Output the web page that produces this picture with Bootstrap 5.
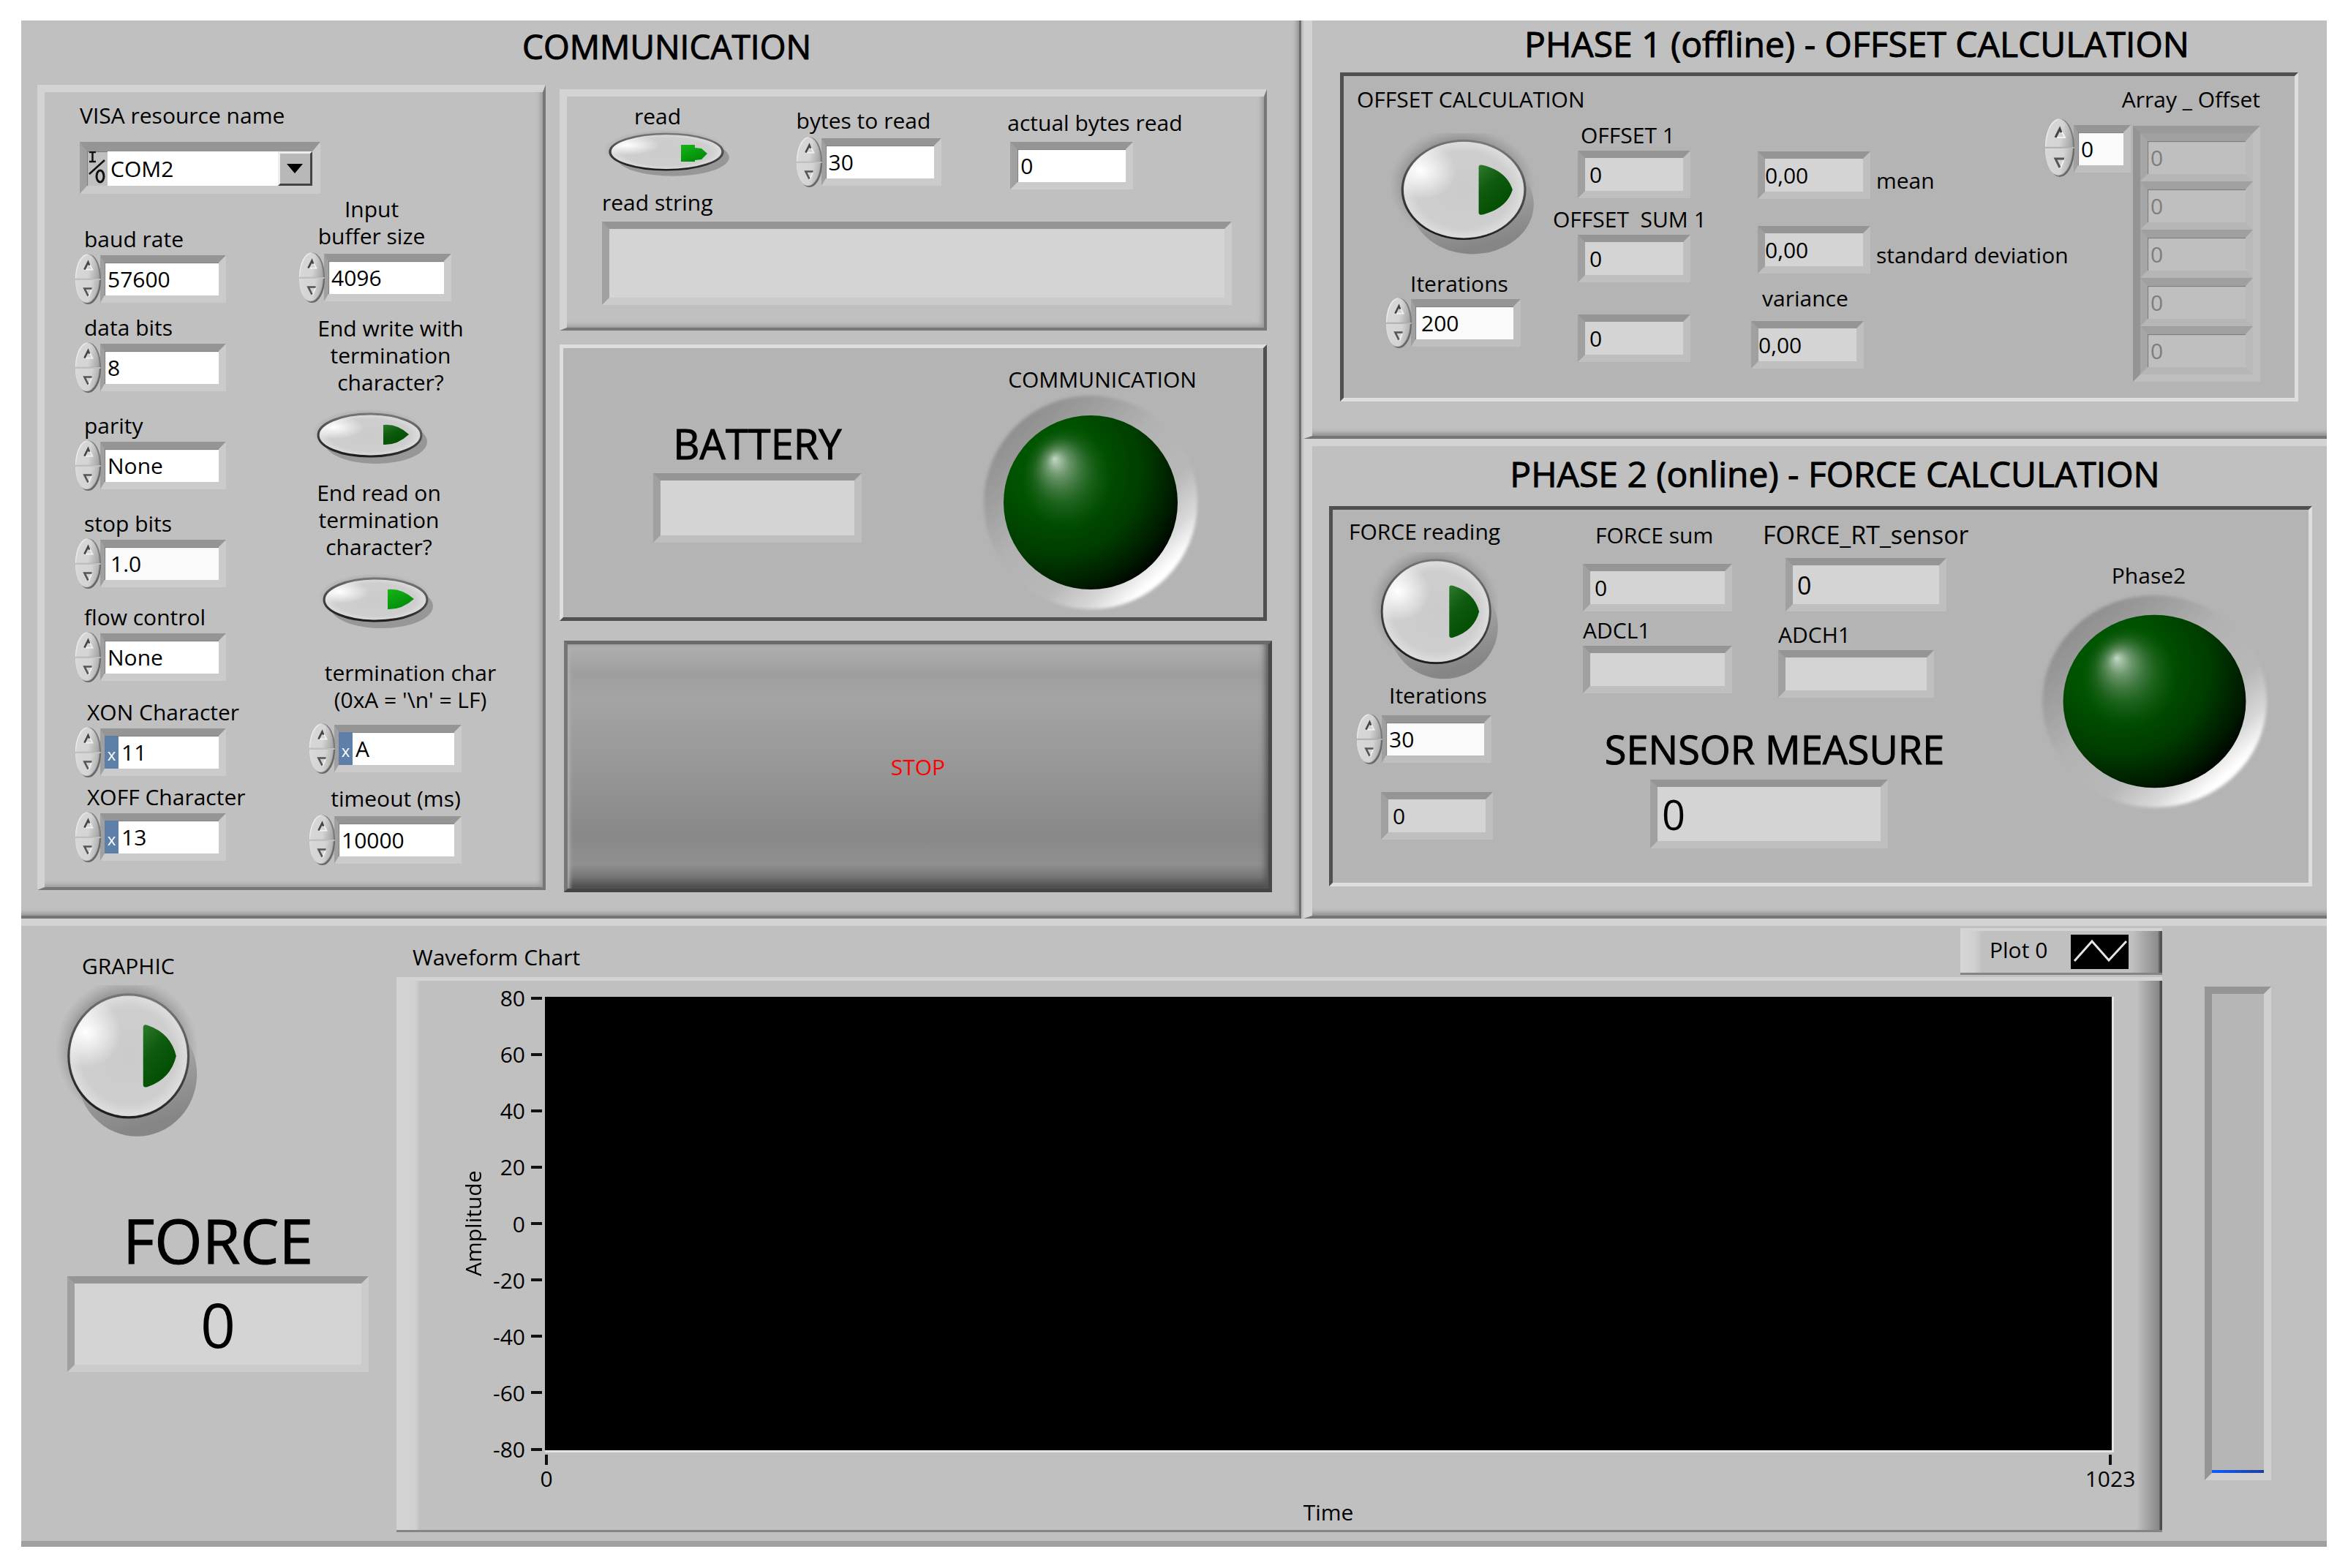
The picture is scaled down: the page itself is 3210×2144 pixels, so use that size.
<!DOCTYPE html>
<html lang="en">
<head>
<meta charset="utf-8">
<meta name="viewport" content="width=device-width, initial-scale=1">
<title>Force sensor front panel</title>
<link href="https://cdn.jsdelivr.net/npm/bootstrap@5.3.0/dist/css/bootstrap.min.css" rel="stylesheet">
<style>
:root{--lite:#d3d3d3;--face:#c0c0c0;--rim:#cbcbcb}
body{font-family:"Open Sans","Noto Sans",sans-serif;font-size:30px;line-height:37px;color:#000;background:#fff}
label,.cap{display:block;line-height:37px;white-space:nowrap}
h2,h3{font-weight:400;margin:0;white-space:nowrap;text-align:center;color:#000}
button{color:#000}
svg{display:block}

/* panes */
.panes{margin:28px 29px 27px;background:var(--face);grid-template-columns:1753fr 1399fr;grid-template-rows:572px 656px auto}
.pane-comm{grid-row:span 2;margin-right:3px;border-right:3px solid #6e6e6e;border-bottom:4px solid #757575;box-shadow:inset -7px -7px 6px -4px #8f8f8f;padding:5px 44px 0 22px}
.pane-phase{border-left:12px solid var(--lite);border-bottom:4px solid #757575;box-shadow:inset 0 -9px 6px -5px #8f8f8f}
.pane-two{border-top:10px solid var(--lite)}
.pane-chart{grid-column:span 2;padding-bottom:12px;border-top:10px solid var(--lite);border-bottom:8px solid #a0a0a0;grid-template-columns:513fr 2414fr 225fr}
.ttl{font-size:48px;line-height:60px;-webkit-text-stroke:1px #000}
.ttl-comm{font-size:46px;padding-left:40px}
.big{font-size:56px;line-height:64px;-webkit-text-stroke:1px #000}
.big-sensor{font-size:54px}
.huge{font-size:84px;line-height:96px;-webkit-text-stroke:1px #000}

/* bevels */
.raised{border:solid;border-width:10px 4px 4px 10px;border-color:var(--lite) #777 #777 var(--lite);box-shadow:inset -7px -7px 6px -4px #999}
.slab{background:#b4b4b4;border:5px solid;border-color:#dedede #505050 #505050 #dedede}
.well{background:#b4b4b4;border:5px solid;border-color:#505050 #dedede #dedede #505050;--rim:#bfbfbf}
.slab{--rim:#bfbfbf}
.fld{display:flex;flex:none;height:65px;background:#fff;border:10px solid;border-color:#959595 var(--rim) var(--rim) #a0a0a0;box-shadow:inset 1px 1px 1px #777}
.fld input,.fld select,.fld textarea{flex:1 1 0;min-width:0;width:100%;height:100%;border:0;background:transparent;padding:0 0 0 4px;font:inherit;color:inherit;appearance:none;outline:0;resize:none}
.ind{background:#d4d4d4;box-shadow:none}
.ind input{padding-left:6px}
.off{background:#fafafa}
.radix{width:19px;background:#5d7fa8;color:#fff;font-size:22px;text-align:center;line-height:50px}
.num .fld{border-left-width:6px;margin-left:-1px}

/* increment and decrement control */
.num{display:flex;align-items:center}
.spin{width:35px;height:69px;display:flex;flex-direction:column;gap:2px;flex:none;z-index:1}
.spin button{flex:1;border:0;padding:0;display:flex;align-items:center;justify-content:center;background:linear-gradient(100deg,#d8d8d8,#d4d4d4 55%,#9a9a9a);border-radius:50% 50% 0 0/100% 100% 0 0;box-shadow:inset -2px 0 1px #777,inset 1px 1px 1px #eee}
.spin button+button{border-radius:0 0 50% 50%/0 0 100% 100%;box-shadow:inset -2px -2px 1px #666,inset 1px 0 1px #ddd}
.plain{border:0;padding:0;background:none}

/* communication pane */
.comm-grid{margin-top:23px;grid-template-columns:695fr 967fr;column-gap:19px}
.visa-box{padding:13px 10px 34px 42px}
.visa{padding-left:6px}
.visa .fld{width:329px;height:71px;margin-top:18px;border-width:13px 11px 11px 10px;background:var(--face)}
.visa select{background:#fff}
.drop{width:47px;border:3px solid;border-color:#eee #444 #444 #eee;background:#b8b8b8;pointer-events:none}
.visa-cols{display:grid;grid-template-columns:306px auto}
.col-a{display:grid;padding-top:43px;grid-template-rows:121px 134px 134px 128px 130px 116px 106px}
.col-a label{padding-left:12px;margin-bottom:2px}
.col-a .fld{width:172px}
.col-b{display:grid;padding-top:2px;grid-template-rows:163px 225px 246px 172px 106px;text-align:center}
.col-b .fld{width:174px}
.col-b .num{margin-top:4px}
.col-b .low{padding-left:14px}
.col-b .lower{margin-top:14px}
.pill{width:161px;height:80px;margin-top:18px}
.w-buf{width:198px}.w-write{width:250px}.w-read{width:218px}.w-term{width:276px}.w-time{width:236px}
.stack{padding-top:6px;display:grid;grid-template-rows:330px 378px 344px;row-gap:19px}
.read-box{padding:0 44px 0 48px}
.read-row{display:grid;height:126px;grid-template-columns:265fr 288fr 306fr}
.read-row>div:nth-child(1){padding-top:8px}
.read-row>div:nth-child(2){padding-top:14px}
.read-row>div:nth-child(3){padding-top:17px}
.pill-read{width:176px;height:68px}
.read-string{height:114px;margin-top:8px}
.batt-box{padding:24px 86px 0 123px}
.batt{width:285px;padding-top:74px}
.batt .fld{height:95px;margin-top:9px}
.led{width:300px}
.led .cap{padding-left:32px}
.led svg{width:300px;height:300px}
.stop{margin:8px -7px -8px 6px;border:5px solid;border-color:#6a6a6a #484848 #444 #767676;border-radius:0;color:#f00;background:linear-gradient(#b0b0b0,#9e9e9e 12%,#a4a4a4 22%,#979797 50%,#888 78%,#909090 90%,#777 95%,#484848);box-shadow:inset -8px 0 8px -4px #555,inset 6px 0 5px -3px #b0b0b0}

/* phase one */
.offset-well{margin:9px 39px 0 38px;height:450px;display:grid;grid-template-columns:minmax(0,286fr) minmax(0,271fr) minmax(0,402fr) minmax(0,341fr)}
.p1-ttl{padding:2px 0 0 102px}
.oc{padding-top:13px}
.oc>label,.oc>.cap{padding-left:18px}
.oc .knob{width:215px;height:168px;margin:28px 0 19px 62px}
.iter{padding-left:58px}
.iter label{padding-left:33px;margin-bottom:1px}
.iter .fld{width:150px}
.sums{padding-top:62px}
.sums .fld{width:154px;margin:3px 0 0 34px}
.sums .fld+label{margin-top:10px}
.sums .first{padding-left:38px}
.sums .third{margin-top:44px}
.stats{padding-top:103px}
.stats .fld{width:154px}
.statline{display:flex;align-items:end;gap:8px;padding-left:9px;margin-bottom:37px}
.statline label{margin-bottom:7px}
.var label{padding-left:15px;margin:-22px 0 13px}
.arr{padding:13px 47px 0 0}
.arr .spin{width:40px;height:80px}
.arr .num{align-items:start}
.arr .num>.fld{width:78px;margin-top:9px}
.cells{flex:1;margin:10px 0 0 3px;border:10px solid;border-color:#9a9a9a #bebebe #bebebe #949494}
.cells .fld{height:66px;margin:0;background:#bfbfbf;color:#7d7d7d;border:10px solid;border-top-width:11px;border-color:#a0a0a0 #bababa #b6b6b6 #a6a6a6}

/* phase two */
.force-well{margin:14px 20px 0 23px;height:520px;display:grid;grid-template-columns:342fr 624fr 368fr}
.p2-ttl{padding-left:42px}
.fr{padding-top:11px}
.fr>.cap{padding-left:22px}
.fr .knob{width:190px;height:176px;margin:10px 0 1px 51px}
.fr .iter{padding-left:33px}
.fr .iter label{padding-left:44px;margin-bottom:7px}
.fr .count{width:153px;margin:38px 0 0 66px}
.meas{display:grid;padding-top:16px;grid-template-columns:246px auto;grid-template-rows:279px auto}
.meas .tall{height:73px}
.m1 .fld{width:204px;margin-top:3px}
.m1 label:first-child{padding-left:17px;margin-bottom:21px}
.m1 .adc{margin-top:7px}
.m2 .fld{width:213px;margin:3px 0 0 21px}
.m2 label:first-child{margin-bottom:13px;font-size:34px}
.m2 .tall{width:220px;margin-left:31px;font-size:34px}
.m2 .adc{margin-top:13px;padding-left:21px}
.sensor{grid-column:span 2;width:524px}
.sensor .fld{width:325px;height:94px;margin:10px 0 0 92px;font-size:56px}
.led-two{padding-top:71px;width:315px}
.led-two svg{width:315px;height:298px;margin-top:5px}

/* chart pane */
.graphic{padding:36px 0 0 47px}
.graphic>.cap{padding-left:36px}
.graphic .knob{width:210px;height:210px;margin:8px 0 91px}
.force{width:412px;margin-left:16px}
.force .fld{height:131px;font-size:84px;margin-top:1px}
.force input{text-align:center;padding:0}
.chart-head{height:70px;padding-left:22px}
.legend{width:276px;height:64px;margin-top:3px;padding-left:40px;border-top:4px solid #d3d3d3;border-bottom:3px solid #858585;background:linear-gradient(90deg,#d6d6d6 0,#d0d0d0 20px,#c0c0c0 30px,#c0c0c0 235px,#8c8c8c 270px,#555 273px,#555)}
.legend span{padding-bottom:6px}
.frame{height:759px;padding:22px 69px 0 86px;border-top:5px solid #d3d3d3;border-bottom:3px solid #858585;display:grid;grid-template-columns:38px 1fr;background:linear-gradient(90deg,#d3d3d3 0,#d1d1d1 26px,transparent 32px),linear-gradient(270deg,#4c4c4c 0,#4c4c4c 3px,#868686 4px,#c0c0c0 35px)}
.ylab{writing-mode:vertical-rl;transform:rotate(180deg);height:620px;text-align:center}
.plotgrid{display:grid;grid-template-columns:79px 1fr;grid-template-rows:620px auto}
.yticks{display:flex;flex-direction:column;justify-content:space-between;margin:-17px 4px -17px 0}
.yticks div{display:flex;align-items:center;justify-content:end;gap:8px}
.yticks div::after{content:"";width:15px;height:4px;background:#111}
.plot{background:#000;border:solid #e4e4e4;border-width:0 3px 3px 0;margin:0 -3px -3px 0;z-index:1}
.xticks{grid-column:2;display:flex;justify-content:space-between;margin:6px -33px 0;text-align:center}
.xticks div{width:70px}
.xticks div::before{content:"";display:block;width:4px;height:14px;margin:0 auto;background:#111}
.xlab{grid-column:2;text-align:center;margin-top:3px}
.tank{width:91px;height:675px;margin:83px 0 0 58px;border:10px solid;border-color:#959595 #d0d0d0 #d0d0d0 #959595;background:#b6b6b6;display:flex;align-items:end}
.tank div{width:100%;height:4px;background:linear-gradient(90deg,#0a5cff,#1f3f9a)}
</style>
</head>
<body>
<svg width="0" height="0" class="position-absolute" aria-hidden="true">
  <defs>
    <radialGradient id="gKnob" cx=".5" cy=".5" r=".52"><stop offset="0" stop-color="#cbcbcb"/><stop offset=".75" stop-color="#cecece"/><stop offset=".92" stop-color="#dcdcdc"/><stop offset="1" stop-color="#c2c2c2"/></radialGradient>
    <radialGradient id="gHi" cx=".14" cy=".3" r=".3"><stop offset="0" stop-color="#fff"/><stop offset="1" stop-color="#fff" stop-opacity="0"/></radialGradient>
    <linearGradient id="gShade" x1="0" y1="0" x2=".3" y2="1"><stop offset=".4" stop-color="#aaa"/><stop offset="1" stop-color="#868686"/></linearGradient>
    <radialGradient id="gHalo" cx=".5" cy=".5" r=".5"><stop offset=".75" stop-color="#808080" stop-opacity=".75"/><stop offset="1" stop-color="#999" stop-opacity="0"/></radialGradient>
    <linearGradient id="gEdge" x1=".6" y1="0" x2=".4" y2="1"><stop offset="0" stop-color="#777"/><stop offset="1" stop-color="#1c1c1c"/></linearGradient>
    <linearGradient id="gD" x1="0" y1="0" x2=".6" y2="1"><stop offset="0" stop-color="#2c7a2c"/><stop offset=".45" stop-color="#0e5a0e"/><stop offset="1" stop-color="#004c00"/></linearGradient>
    <linearGradient id="gOn" x1="0" y1="0" x2=".6" y2="1"><stop offset="0" stop-color="#17b517"/><stop offset="1" stop-color="#008a0a"/></linearGradient>
    <linearGradient id="gRing" x1=".15" y1=".1" x2=".86" y2=".88"><stop offset="0" stop-color="#8c8c8c"/><stop offset=".42" stop-color="#b2b2b2"/><stop offset=".68" stop-color="#b8b8b8"/><stop offset=".84" stop-color="#d8d8d8"/><stop offset=".95" stop-color="#fff"/></linearGradient>
    <radialGradient id="gLed" cx=".3" cy=".3" r=".78"><stop offset="0" stop-color="#005a00"/><stop offset=".3" stop-color="#005400"/><stop offset=".65" stop-color="#003c00"/><stop offset=".88" stop-color="#001c00"/><stop offset="1" stop-color="#000600"/></radialGradient>
    <radialGradient id="gSpot" cx=".5" cy=".5" r=".5" fx=".36" fy=".3"><stop offset="0" stop-color="#c4d8c4"/><stop offset=".25" stop-color="#7da07d" stop-opacity=".85"/><stop offset=".65" stop-color="#3c703c" stop-opacity=".45"/><stop offset="1" stop-color="#1c5c1c" stop-opacity="0"/></radialGradient>
    <filter id="soft" x="-10%" y="-10%" width="120%" height="120%"><feGaussianBlur stdDeviation="2"/></filter>
  </defs>
  <symbol id="knob" viewBox="0 0 200 195" preserveAspectRatio="none">
    <ellipse cx="93" cy="82" rx="93" ry="92" fill="url(#gHalo)"/>
    <ellipse cx="106" cy="113" rx="78" ry="79" fill="url(#gShade)"/>
    <circle cx="95" cy="90" r="78" fill="url(#gKnob)" stroke="url(#gEdge)" stroke-width="3"/>
    <circle cx="95" cy="90" r="76" fill="url(#gHi)"/>
    <path d="M114 54Q114 49 120 51Q150 61 157 90Q150 119 120 129Q114 131 114 126Z" fill="url(#gD)"/>
  </symbol>
  <symbol id="pillbase" viewBox="0 0 160 80" preserveAspectRatio="none">
    <ellipse cx="78" cy="33" rx="77" ry="33" fill="url(#gHalo)" opacity=".6"/>
    <ellipse cx="88" cy="45" rx="70" ry="30" fill="#979797"/>
    <ellipse cx="80" cy="36" rx="70" ry="29" fill="url(#gKnob)" stroke="url(#gEdge)" stroke-width="3"/>
    <ellipse cx="80" cy="36" rx="68" ry="27" fill="url(#gHi)"/>
  </symbol>
  <symbol id="led" viewBox="0 0 300 300" preserveAspectRatio="none">
    <circle cx="150" cy="150" r="146" fill="url(#gRing)" filter="url(#soft)"/>
    <circle cx="150" cy="150" r="119" fill="url(#gLed)"/>
    <ellipse cx="118" cy="118" rx="62" ry="70" fill="url(#gSpot)"/>
  </symbol>
  <symbol id="up" viewBox="0 0 20 20"><path d="M10 3L17 16H4" fill="none" stroke="#f2f2f2" stroke-width="2"/><path d="M4 16L10 4L12 9" fill="none" stroke="#444" stroke-width="3"/></symbol>
  <symbol id="down" viewBox="0 0 20 20"><path d="M16 4L11 17" fill="none" stroke="#f2f2f2" stroke-width="2"/><path d="M16 4H4L10 16" fill="none" stroke="#555" stroke-width="3"/></symbol>
</svg>

<main class="panes d-grid">
  <section class="pane-comm">
    <h2 class="ttl ttl-comm">COMMUNICATION</h2>
    <div class="comm-grid d-grid">
      <div class="raised visa-box">
        <div class="visa">
          <label for="visa">VISA resource name</label>
          <div class="fld">
            <svg width="28" height="47" viewBox="0 0 28 47" aria-hidden="true"><path d="M3 1h9M7.500 1v13M3 14h9M3 31L24 12" fill="none" stroke="#111" stroke-width="2.500"/><ellipse cx="18" cy="34" rx="5" ry="8" fill="none" stroke="#111" stroke-width="3"/></svg>
            <select id="visa"><option>COM2</option></select>
            <span class="drop"><svg width="41" height="41" viewBox="0 0 41 41"><path d="M9 14H31L20 27Z"/></svg></span>
          </div>
        </div>
        <div class="visa-cols">
          <div class="col-a">
            <div><label for="baud">baud rate</label><div class="num"><div class="spin"><button type="button" aria-label="Increase"><svg width="17" height="17"><use href="#up"/></svg></button><button type="button" aria-label="Decrease"><svg width="17" height="17"><use href="#down"/></svg></button></div><div class="fld"><input id="baud" value="57600"></div></div></div>
            <div><label for="bits">data bits</label><div class="num"><div class="spin"><button type="button" aria-label="Increase"><svg width="17" height="17"><use href="#up"/></svg></button><button type="button" aria-label="Decrease"><svg width="17" height="17"><use href="#down"/></svg></button></div><div class="fld"><input id="bits" value="8"></div></div></div>
            <div><label for="parity">parity</label><div class="num"><div class="spin"><button type="button" aria-label="Increase"><svg width="17" height="17"><use href="#up"/></svg></button><button type="button" aria-label="Decrease"><svg width="17" height="17"><use href="#down"/></svg></button></div><div class="fld"><input id="parity" value="None"></div></div></div>
            <div><label for="stopbits">stop bits</label><div class="num"><div class="spin"><button type="button" aria-label="Increase"><svg width="17" height="17"><use href="#up"/></svg></button><button type="button" aria-label="Decrease"><svg width="17" height="17"><use href="#down"/></svg></button></div><div class="fld off"><input id="stopbits" class="ps-2" value="1.0"></div></div></div>
            <div><label for="flow">flow control</label><div class="num"><div class="spin"><button type="button" aria-label="Increase"><svg width="17" height="17"><use href="#up"/></svg></button><button type="button" aria-label="Decrease"><svg width="17" height="17"><use href="#down"/></svg></button></div><div class="fld"><input id="flow" value="None"></div></div></div>
            <div><label for="xon" class="ps-3">XON Character</label><div class="num"><div class="spin"><button type="button" aria-label="Increase"><svg width="17" height="17"><use href="#up"/></svg></button><button type="button" aria-label="Decrease"><svg width="17" height="17"><use href="#down"/></svg></button></div><div class="fld"><span class="radix">x</span><input id="xon" value="11"></div></div></div>
            <div><label for="xoff" class="ps-3">XOFF Character</label><div class="num"><div class="spin"><button type="button" aria-label="Increase"><svg width="17" height="17"><use href="#up"/></svg></button><button type="button" aria-label="Decrease"><svg width="17" height="17"><use href="#down"/></svg></button></div><div class="fld"><span class="radix">x</span><input id="xoff" value="13"></div></div></div>
          </div>
          <div class="col-b">
            <div><label for="buf" class="w-buf">Input<br>buffer size</label><div class="num"><div class="spin"><button type="button" aria-label="Increase"><svg width="17" height="17"><use href="#up"/></svg></button><button type="button" aria-label="Decrease"><svg width="17" height="17"><use href="#down"/></svg></button></div><div class="fld"><input id="buf" value="4096"></div></div></div>
            <div><label for="endw" class="w-write">End write with<br>termination<br>character?</label>
              <button id="endw" type="button" class="plain d-block ms-3"><svg class="pill"><use href="#pillbase"/><path d="M99 22Q118 20 134 35Q118 50 99 49Z" fill="url(#gD)"/></svg></button></div>
            <div><label for="endr" class="w-read">End read on<br>termination<br>character?</label>
              <button id="endr" type="button" class="plain d-block ms-4"><svg class="pill"><use href="#pillbase"/><path d="M97 22Q116 20 133 35Q116 50 97 49Z" fill="url(#gOn)"/></svg></button></div>
            <div class="low"><label for="term" class="w-term">termination char<br>(0xA = '\n' = LF)</label><div class="num lower"><div class="spin"><button type="button" aria-label="Increase"><svg width="17" height="17"><use href="#up"/></svg></button><button type="button" aria-label="Decrease"><svg width="17" height="17"><use href="#down"/></svg></button></div><div class="fld"><span class="radix">x</span><input id="term" value="A"></div></div></div>
            <div class="low"><label for="tmo" class="w-time">timeout (ms)</label><div class="num"><div class="spin"><button type="button" aria-label="Increase"><svg width="17" height="17"><use href="#up"/></svg></button><button type="button" aria-label="Decrease"><svg width="17" height="17"><use href="#down"/></svg></button></div><div class="fld"><input id="tmo" value="10000"></div></div></div>
          </div>
        </div>
      </div>

      <div class="stack">
        <div class="raised read-box">
          <div class="read-row">
            <div><label for="read" class="pill-read h-auto text-center pe-4">read</label>
              <button id="read" type="button" class="plain d-block"><svg class="pill-read"><use href="#pillbase"/><path d="M108 21h19v4l9 1l8 7l-8 8l-9 1v2h-19Z" fill="url(#gOn)"/></svg></button></div>
            <div><label for="btr">bytes to read</label><div class="num mt-1"><div class="spin"><button type="button" aria-label="Increase"><svg width="17" height="17"><use href="#up"/></svg></button><button type="button" aria-label="Decrease"><svg width="17" height="17"><use href="#down"/></svg></button></div><div class="fld" style="width:164px"><input id="btr" value="30"></div></div></div>
            <div><label for="abr">actual bytes read</label><div class="fld mt-2 ms-1" style="width:168px"><input id="abr" value="0" readonly></div></div>
          </div>
          <label for="rs">read string</label>
          <div class="fld ind read-string"><textarea id="rs" readonly></textarea></div>
        </div>
        <div class="slab batt-box d-flex justify-content-between">
          <div class="batt"><label for="batt" class="big text-center">BATTERY</label><div class="fld ind"><input id="batt" readonly></div></div>
          <div class="led"><span class="cap text-center">COMMUNICATION</span><svg role="img" aria-label="Communication off"><use href="#led"/></svg></div>
        </div>
        <button type="button" class="stop">STOP</button>
      </div>
    </div>
  </section>

  <section class="pane-phase">
    <h2 class="ttl p1-ttl">PHASE 1 (offline) - OFFSET CALCULATION</h2>
    <div class="well offset-well">
      <div class="oc">
        <label for="oc">OFFSET CALCULATION</label>
        <button id="oc" type="button" class="plain d-block"><svg class="knob"><use href="#knob"/></svg></button>
        <div class="iter"><label for="it1">Iterations</label><div class="num"><div class="spin"><button type="button" aria-label="Increase"><svg width="17" height="17"><use href="#up"/></svg></button><button type="button" aria-label="Decrease"><svg width="17" height="17"><use href="#down"/></svg></button></div><div class="fld off"><input id="it1" class="ps-2" value="200"></div></div></div>
      </div>
      <div class="sums">
        <label for="o1" class="first">OFFSET 1</label><div class="fld ind"><input id="o1" value="0" readonly></div>
        <label for="os1">OFFSET&nbsp; SUM 1</label><div class="fld ind"><input id="os1" value="0" readonly></div>
        <div class="fld ind third"><input aria-label="Samples" value="0" readonly></div>
      </div>
      <div class="stats">
        <div class="statline"><div class="fld ind"><input id="mean" class="ps-0" value="0,00" readonly></div><label for="mean">mean</label></div>
        <div class="statline"><div class="fld ind"><input id="sd" class="ps-0" value="0,00" readonly></div><label for="sd">standard deviation</label></div>
        <div class="var"><label for="va">variance</label><div class="fld ind"><input id="va" class="ps-0" value="0,00" readonly></div></div>
      </div>
      <div class="arr">
        <label for="ai" class="text-end mb-2">Array _ Offset</label>
        <div class="num">
          <div class="spin"><button type="button" aria-label="Increase"><svg width="20" height="20"><use href="#up"/></svg></button><button type="button" aria-label="Decrease"><svg width="20" height="20"><use href="#down"/></svg></button></div>
          <div class="fld off"><input id="ai" value="0"></div>
          <div class="cells">
            <div class="fld"><input aria-label="Element 0" value="0" readonly></div>
            <div class="fld"><input aria-label="Element 1" value="0" readonly></div>
            <div class="fld"><input aria-label="Element 2" value="0" readonly></div>
            <div class="fld"><input aria-label="Element 3" value="0" readonly></div>
            <div class="fld"><input aria-label="Element 4" value="0" readonly></div>
          </div>
        </div>
      </div>
    </div>
  </section>

  <section class="pane-phase pane-two">
    <h2 class="ttl p2-ttl pt-2">PHASE 2 (online) - FORCE CALCULATION</h2>
    <div class="well force-well">
      <div class="fr">
        <label for="frd" class="cap">FORCE reading</label>
        <button id="frd" type="button" class="plain d-block"><svg class="knob"><use href="#knob"/></svg></button>
        <div class="iter"><label for="it2">Iterations</label><div class="num"><div class="spin"><button type="button" aria-label="Increase"><svg width="17" height="17"><use href="#up"/></svg></button><button type="button" aria-label="Decrease"><svg width="17" height="17"><use href="#down"/></svg></button></div><div class="fld off"><input id="it2" value="30"></div></div></div>
        <div class="fld ind count"><input aria-label="Count" value="0" readonly></div>
      </div>
      <div class="meas">
        <div class="m1">
          <label for="fs">FORCE sum</label><div class="fld ind"><input id="fs" value="0" readonly></div>
          <label for="adcl" class="adc">ADCL1</label><div class="fld ind"><input id="adcl" readonly></div>
        </div>
        <div class="m2">
          <label for="frt">FORCE_RT_sensor</label><div class="fld ind tall"><input id="frt" value="0" readonly></div>
          <label for="adch" class="adc">ADCH1</label><div class="fld ind"><input id="adch" readonly></div>
        </div>
        <div class="sensor"><label for="sm" class="big big-sensor text-center">SENSOR MEASURE</label><div class="fld ind"><input id="sm" value="0" readonly></div></div>
      </div>
      <div class="led-two"><span class="cap text-center pe-3">Phase2</span><svg role="img" aria-label="Phase 2 off"><use href="#led"/></svg></div>
    </div>
  </section>

  <section class="pane-chart d-grid">
    <div class="graphic">
      <label for="gr" class="cap">GRAPHIC</label>
      <button id="gr" type="button" class="plain d-block"><svg class="knob"><use href="#knob"/></svg></button>
      <div class="force"><label for="fo" class="huge text-center">FORCE</label><div class="fld ind"><input id="fo" value="0" readonly></div></div>
    </div>
    <div class="chart-side">
      <div class="chart-head d-flex justify-content-between">
        <span class="cap pt-4">Waveform Chart</span>
        <div class="legend d-flex align-items-center">
          <span class="me-4">Plot 0</span>
          <svg width="79" height="47" viewBox="0 0 79 47" class="ms-2" aria-hidden="true"><rect width="79" height="47"/><path d="M5 36L29 9L52 35L76 9" fill="none" stroke="#e4e4e4" stroke-width="3"/></svg>
        </div>
      </div>
      <div class="frame">
        <div class="ylab">Amplitude</div>
        <div class="plotgrid">
          <div class="yticks"><div>80</div><div>60</div><div>40</div><div>20</div><div>0</div><div>-20</div><div>-40</div><div>-60</div><div>-80</div></div>
          <div class="plot"></div>
          <div class="xticks"><div>0</div><div>1023</div></div>
          <div class="xlab">Time</div>
        </div>
      </div>
    </div>
    <div><div class="tank" role="progressbar" aria-label="Force level" aria-valuenow="0" aria-valuemin="0" aria-valuemax="100"><div></div></div></div>
  </section>
</main>
<script src="https://cdn.jsdelivr.net/npm/bootstrap@5.3.0/dist/js/bootstrap.bundle.min.js"></script>
</body>
</html>
